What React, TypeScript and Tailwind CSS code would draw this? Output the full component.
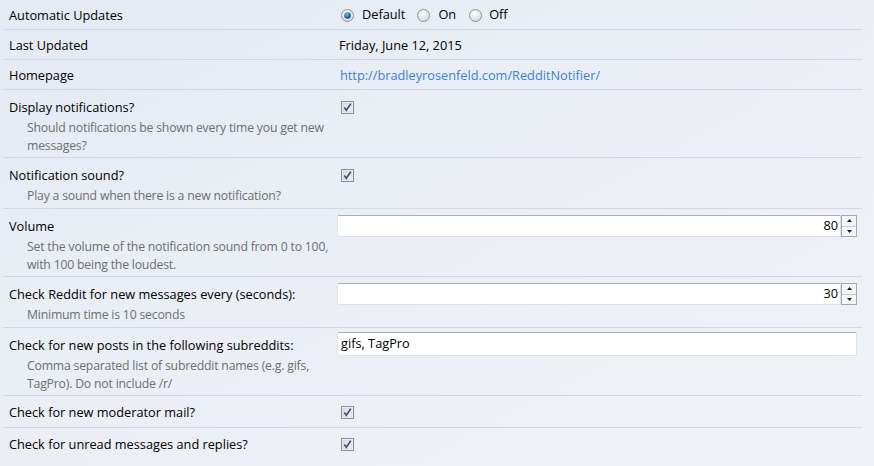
const font = { fontFamily: '"Open Sans", "Noto Sans", sans-serif' };

function Radio({ checked }: { checked?: boolean }) {
  return (
    <svg width="13" height="13" viewBox="0 0 13 13" className="shrink-0">
      <defs>
        <radialGradient id={checked ? "rgOn" : "rgOff"} cx="0.4" cy="0.35" r="0.7">
          <stop offset="0" stopColor="#ffffff" />
          <stop offset="1" stopColor="#d4d6d9" />
        </radialGradient>
        <radialGradient id="dot" cx="0.4" cy="0.35" r="0.7">
          <stop offset="0" stopColor="#7fc3ee" />
          <stop offset="0.6" stopColor="#1b6ea8" />
          <stop offset="1" stopColor="#0d3f63" />
        </radialGradient>
      </defs>
      <circle cx="6.5" cy="6.5" r="6" fill={`url(#${checked ? "rgOn" : "rgOff"})`} stroke="#8f9497" strokeWidth="1" />
      {checked && <circle cx="6.5" cy="6.5" r="3.3" fill="url(#dot)" />}
    </svg>
  );
}

function Check() {
  return (
    <svg width="13" height="13" viewBox="0 0 13 13" className="shrink-0">
      <defs>
        <linearGradient id="cb" x1="0" y1="0" x2="1" y2="1">
          <stop offset="0" stopColor="#dcdcdc" />
          <stop offset="1" stopColor="#f4f4f4" />
        </linearGradient>
      </defs>
      <rect x="0.5" y="0.5" width="12" height="12" fill="#f6f6f6" stroke="#8e8f8f" />
      <rect x="2" y="2" width="9" height="9" fill="url(#cb)" stroke="#c2c2c2" strokeWidth="0.5" />
      <path d="M3.3 6.6 L5.3 9.3 L9.8 2.8" fill="none" stroke="#3c4f8e" strokeWidth="1.6" />
    </svg>
  );
}

function NumberBox({ value }: { value: string }) {
  return (
    <div className="flex h-[22px] w-[520px]">
      <div className="flex flex-1 items-center justify-end rounded-l-[2px] border border-[#dde1e8] border-t-[#abadb3] bg-white pr-[2px] text-black">
        {value}
      </div>
      <div className="flex w-[16px] flex-col border border-[#a4a8ae] bg-[#f5f6f7]">
        <div className="flex flex-1 items-center justify-center border-b border-[#c8cbd0]">
          <svg width="5" height="3" viewBox="0 0 5 3"><path d="M2.5 0 L5 3 L0 3Z" fill="#1f1f1f" /></svg>
        </div>
        <div className="flex flex-1 items-center justify-center">
          <svg width="5" height="3" viewBox="0 0 5 3"><path d="M0 0 L5 0 L2.5 3Z" fill="#1f1f1f" /></svg>
        </div>
      </div>
    </div>
  );
}

function Row({
  label,
  desc,
  children,
  simple,
  last,
  tall,
  twoLine,
}: {
  label: string;
  desc?: string;
  children?: React.ReactNode;
  simple?: boolean;
  last?: boolean;
  tall?: boolean;
  twoLine?: boolean;
}) {
  const pad = simple
    ? "pt-[6px] pb-[5px]"
    : desc
      ? twoLine
        ? "pt-2 pb-[2px]"
        : "pt-2 pb-[3px]"
      : tall
        ? "pt-[7px] pb-[6px]"
        : "pt-[7px] pb-[5px]";
  return (
    <div className={`relative flex ${pad} ${last ? "" : "border-b border-[#d3d8e0]"}`}>
      <div className="w-[334px] shrink-0 pl-[6px]">
        <div className="h-[18px] whitespace-nowrap leading-[18px] text-black">{label}</div>
        {desc && (
          <div className="mt-[3px] w-[326px] pl-[18px] text-[12.25px] leading-[18px] tracking-[-0.2px] text-[#6f6f6f]">
            {desc}
          </div>
        )}
      </div>
      <div className="flex flex-1 items-start">{children}</div>
    </div>
  );
}

export default function App() {
  return (
    <div
      style={font}
      className="h-[466px] w-[874px] overflow-hidden bg-gradient-to-br from-[#e5eaf3] via-[#ebeff5] to-[#eff2f7] pl-[3px] pr-[12px] text-[12.75px]"
    >
      <Row label="Automatic Updates" simple>
        <div className="flex h-[18px] items-center pl-[4px]">
          <Radio checked />
          <span className="ml-[8px] text-black">Default</span>
          <span className="ml-[12px] flex"><Radio /></span>
          <span className="ml-[8px] text-black">On</span>
          <span className="ml-[13px] flex"><Radio /></span>
          <span className="ml-[7px] text-black">Off</span>
        </div>
      </Row>
      <Row label="Last Updated" simple>
        <div className="pl-[2px] leading-[18px] text-black">Friday, June 12, 2015</div>
      </Row>
      <Row label="Homepage" simple>
        <div className="pl-[3px] leading-[18px] text-[#3d80d4]">http://bradleyrosenfeld.com/RedditNotifier/</div>
      </Row>
      <Row label="Display notifications?" twoLine desc="Should notifications be shown every time you get new messages?">
        <div className="flex h-[18px] items-center pl-[4px]"><Check /></div>
      </Row>
      <Row label="Notification sound?" desc="Play a sound when there is a new notification?">
        <div className="flex h-[18px] items-center pl-[4px]"><Check /></div>
      </Row>
      <Row label="Volume" twoLine desc="Set the volume of the notification sound from 0 to 100, with 100 being the loudest.">
        <div className="-mt-[2px]"><NumberBox value="80" /></div>
      </Row>
      <Row label="Check Reddit for new messages every (seconds):" desc="Minimum time is 10 seconds">
        <div className="-mt-[2px]"><NumberBox value="30" /></div>
      </Row>
      <Row label="Check for new posts in the following subreddits:" twoLine desc="Comma separated list of subreddit names (e.g. gifs, TagPro). Do not include /r/">
        <div className="-mt-[4px] flex h-[24px] w-[520px] items-center rounded-[2px] border border-[#dde1e8] border-t-[#abadb3] bg-white pl-[3px] text-black">
          gifs, TagPro
        </div>
      </Row>
      <Row label="Check for new moderator mail?" tall>
        <div className="flex h-[18px] items-center pl-[4px]"><Check /></div>
      </Row>
      <Row label="Check for unread messages and replies?" last>
        <div className="flex h-[18px] items-center pl-[4px]"><Check /></div>
      </Row>
    </div>
  );
}
